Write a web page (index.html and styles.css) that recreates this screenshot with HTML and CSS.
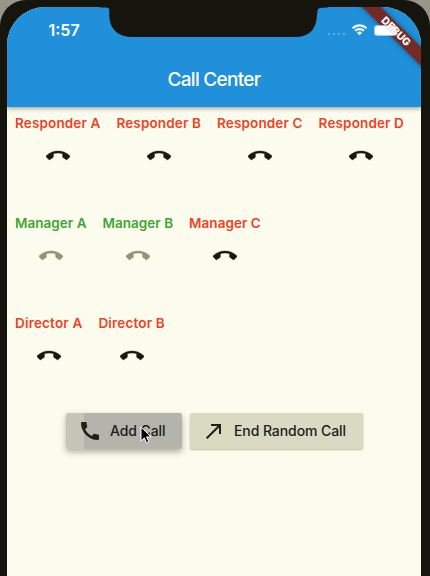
FILE: index.html
```html
<!DOCTYPE html>
<html lang="en">
<head>
<meta charset="utf-8">
<title>Call Center</title>
<link rel="stylesheet" href="styles.css">
</head>
<body>
<svg class="defs" width="0" height="0" aria-hidden="true">
  <symbol id="hangup" viewBox="0 0 24 24"><path d="M12 9c-1.6 0-3.15.25-4.6.72v3.1c0 .39-.23.74-.56.9-.98.49-1.87 1.12-2.66 1.85-.18.18-.43.28-.7.28-.28 0-.53-.11-.71-.29L.29 13.08c-.18-.17-.29-.42-.29-.7 0-.28.11-.53.29-.71C3.34 8.78 7.46 7 12 7s8.66 1.78 11.71 4.67c.18.18.29.43.29.71 0 .28-.11.53-.29.71l-2.48 2.48c-.18.18-.43.29-.71.29-.27 0-.52-.11-.7-.28-.79-.74-1.69-1.36-2.67-1.85-.33-.16-.56-.5-.56-.9v-3.1C15.15 9.25 13.6 9 12 9z"/></symbol>
</svg>
<div class="phone">
  <div class="screen">
    <header class="appbar">
      <div class="status">
        <span class="time">1:57</span>
        <span class="indicators">
          <span class="signal"><i></i><i></i><i></i><i></i></span>
          <svg class="wifi" viewBox="0 0 17 12"><path d="M8.5 2.400c2.400 0 4.600.9 6.200 2.500l1.500-1.500A10.900 10.900 0 0 0 8.500.3 10.900 10.900 0 0 0 .8 3.400l1.500 1.500A8.900 8.900 0 0 1 8.500 2.400zM8.500 6.200c1.400 0 2.600.5 3.600 1.400l1.500-1.500a7.500 7.500 0 0 0-10.200 0l1.500 1.500c1-.9 2.200-1.400 3.600-1.400zM11 8.700a3.700 3.700 0 0 0-5 0l2.500 2.600z"/></svg>
          <span class="battery"></span>
        </span>
      </div>
      <h1>Call Center</h1>
    </header>
    <main>
      <section class="row responders">
        <div class="person busy"><span>Responder A</span><svg><use href="#hangup"/></svg></div>
        <div class="person busy"><span>Responder B</span><svg><use href="#hangup"/></svg></div>
        <div class="person busy"><span>Responder C</span><svg><use href="#hangup"/></svg></div>
        <div class="person busy"><span>Responder D</span><svg><use href="#hangup"/></svg></div>
      </section>
      <section class="row managers">
        <div class="person free"><span>Manager A</span><svg><use href="#hangup"/></svg></div>
        <div class="person free"><span>Manager B</span><svg><use href="#hangup"/></svg></div>
        <div class="person busy"><span>Manager C</span><svg><use href="#hangup"/></svg></div>
      </section>
      <section class="row directors">
        <div class="person busy"><span>Director A</span><svg><use href="#hangup"/></svg></div>
        <div class="person busy"><span>Director B</span><svg><use href="#hangup"/></svg></div>
      </section>
      <div class="actions">
        <button class="add"><svg viewBox="0 0 24 24"><path d="M20.010 15.380c-1.230 0-2.420-.2-3.530-.56-.35-.12-.74-.03-1.010.24l-1.570 1.970c-2.830-1.350-5.480-3.900-6.890-6.830l1.950-1.660c.27-.28.35-.67.24-1.020-.37-1.110-.56-2.300-.56-3.530 0-.54-.45-.99-.99-.99H4.190C3.650 3 3 3.240 3 3.990 3 13.280 10.730 21 20.010 21c.71 0 .99-.63.99-1.180v-3.450c0-.54-.45-.99-.99-.99z"/></svg><span>Add Call</span></button>
        <button class="end"><svg viewBox="0 0 24 24"><path d="M9 5v2h6.590L4 18.590 5.410 20 17 8.410V15h2V5z"/></svg><span>End Random Call</span></button>
      </div>
    </main>
    <div class="banner ribbon"></div>
    <div class="banner debug">DEBUG</div>
  </div>
  <svg class="notch" viewBox="0 0 222 38" preserveAspectRatio="none"><path d="M0 0H222V7.500H221Q212 7.500 212 9.500L211 18Q209 37 190 37H32Q11 37 9 17V10Q9 7.500 6 7.500H0z"/></svg>
  <svg class="cursor" viewBox="0 0 12 18"><path d="M1 1v14l3.300-3.200 2.200 5 2.300-1-2.200-4.900H11z"/></svg>
</div>
</body>
</html>
```
FILE: styles.css
```css
* { box-sizing: border-box; }
body {
  margin: 0;
  background: #98968a;
  font-family: Inter, "Liberation Sans", sans-serif;
}
.defs { position: absolute; }
.phone {
  position: relative;
  width: 430px;
  height: 576px;
  padding: 7px 9px 0 7px;
  background: #15150d;
  border-radius: 26px 26px 0 0;
  overflow: hidden;
}
.screen {
  position: relative;
  height: 569px;
  background: #fcfcee;
  border-radius: 38px 38px 0 0;
  overflow: hidden;
}
.appbar {
  height: 100px;
  background: #2090da;
  color: #fff;
  box-shadow: 0 2px 4px #0005;
}
.status {
  display: flex;
  justify-content: space-between;
  align-items: center;
  height: 46px;
  padding: 0 24px 0 41.500px;
}
.time { font-size: 16px; font-weight: 600; }
.indicators { display: flex; align-items: center; }
.signal { display: flex; gap: 3px; margin: 7px 6px 0 0; }
.signal i { width: 2px; height: 2px; background: #ffffff60; border-radius: 1px; }
.wifi { width: 17px; height: 12px; fill: #fff; }
.battery {
  position: relative;
  z-index: 2;
  width: 23px;
  height: 11px;
  margin-left: 6px;
  border: 1px solid #ffffff90;
  border-radius: 3px;
  background: #fff;
  background-clip: padding-box;
}
h1 {
  margin: 14px 0 0;
  font-size: 19px;
  line-height: 26px;
  font-weight: 500;
  letter-spacing: -0.700px;
  text-align: center;
}
main { padding: 8px 8px 0; }
.row { display: flex; gap: 16px; height: 100px; }
.responders { letter-spacing: 0.140px; }
.managers { letter-spacing: 0.030px; }
.directors { letter-spacing: 0.180px; }
.person { display: flex; flex-direction: column; align-items: center; }
.person span {
  font-size: 13.500px;
  line-height: 16px;
  font-weight: 600;
  white-space: nowrap;
}
.person svg {
  width: 24px;
  height: 24px;
  margin-top: 13px;
  fill: #181810;
  stroke: #181810;
  stroke-width: 0.400px;
}
.busy span { color: #ee4226; }
.free span { color: #40a630; }
.person.free svg { fill: #929278; stroke: #929278; }
.actions { display: flex; justify-content: center; gap: 8px; margin: -2px 0 0 1px; }
button {
  display: flex;
  align-items: center;
  height: 36px;
  padding: 0 0 0 12px;
  border: 0;
  border-radius: 2px;
  font: 500 14px Inter, "Liberation Sans", sans-serif;
  letter-spacing: -0.080px;
  color: #20201a;
  white-space: nowrap;
}
button svg { width: 24px; height: 24px; margin-right: 8px; fill: #20201a; }
button span { margin-top: -1px; }
.add {
  width: 116px;
  background: linear-gradient(90deg, #c6c6b8 0 18px, #b4b4ac 18px);
  box-shadow: 0 3px 6px #77776090;
}
.end {
  width: 173px;
  background: #dadac2;
  box-shadow: 0 1px 2px #77776080;
}
.banner {
  position: absolute;
  top: 18px;
  right: -38px;
  width: 126px;
  height: 13px;
  transform: rotate(45deg);
}
.ribbon {
  background: #742b26;
  box-shadow: 0 0 5px #0007;
}
.debug {
  z-index: 3;
  color: #fff;
  font-size: 10.500px;
  line-height: 13px;
  font-weight: 800;
  text-align: center;
  text-shadow: 0 0 1px #74292a90;
}
.notch { position: absolute; left: 100px; top: 0; width: 228px; height: 38px; fill: #15150d; }
.cursor {
  position: absolute;
  left: 140px;
  top: 426px;
  width: 12px;
  height: 18px;
  fill: #000;
  stroke: #fff;
  stroke-width: 1px;
}
```
